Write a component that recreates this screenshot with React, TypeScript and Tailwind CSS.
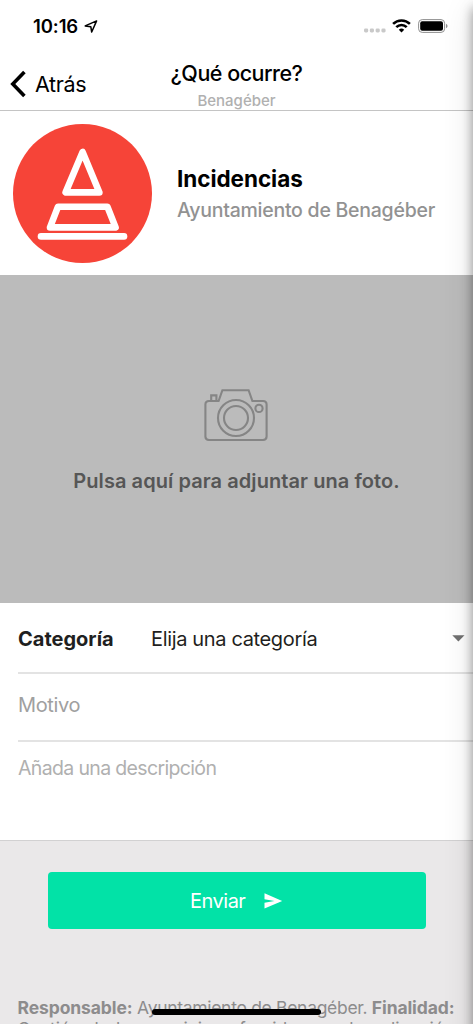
import type { ReactNode } from "react";

const StatusBar = () => {
    return (
        <div className="flex h-[54px] shrink-0 items-start justify-between pl-[33px] pr-[25px] pt-[16px]">
            <div className="flex items-center">
                <span className="w-[47px] text-[18.5px] font-semibold leading-[21px] tracking-[-0.1px]">10:16</span>
                <svg className="ml-[4px]" width="14" height="14" viewBox="0 0 14 14" fill="none" stroke="#000" strokeWidth="1.5" strokeLinejoin="round">
                    <path d="M12.6 0.9 L1.2 5.9 L6.8 6.7 L7.7 12 Z" />
                </svg>
            </div>
            <div className="flex items-start pt-[2px]">
                <svg className="mt-[10px]" width="22" height="5" viewBox="0 0 22 5" fill="#c9c9c9">
                    <rect x="0" y="0.5" width="4.2" height="4" rx="1.4" />
                    <rect x="5.8" y="0.5" width="4.2" height="4" rx="1.4" />
                    <rect x="11.6" y="0.5" width="4.2" height="4" rx="1.4" />
                    <rect x="17.4" y="0.5" width="4.2" height="4" rx="1.4" />
                </svg>
                <svg className="ml-[6px] mt-[1px]" width="19" height="14" viewBox="0 0 19 14" fill="none" stroke="#000" strokeWidth="2.6">
                    <path d="M1.1 4.9 A12 12 0 0 1 17.9 4.9" />
                    <path d="M4.3 8.1 A7.4 7.4 0 0 1 14.7 8.1" />
                    <path d="M9.5 13.6 L6.8 10.8 A4 4 0 0 1 12.2 10.8 Z" fill="#000" stroke="none" />
                </svg>
                <svg className="ml-[7px] mt-[1px]" width="30" height="14" viewBox="0 0 30 14">
                    <rect x="0.6" y="0.6" width="26" height="12.8" rx="3.6" fill="none" stroke="#8f8f8f" strokeWidth="1" />
                    <rect x="2.2" y="2.2" width="22.8" height="9.6" rx="2" fill="#000" />
                    <path d="M28 4.8 Q29.6 5.6 29.6 7 T28 9.2 Z" fill="#8f8f8f" />
                </svg>
            </div>
        </div>
    )
}

const Header = () => {
    return (
        <div className="grid h-[57px] shrink-0 grid-cols-[1fr_auto_1fr] border-b border-[#c4c4c4]">
            <button className="flex items-center self-start pl-[9px] pt-[16px]">
                <svg width="17" height="28" viewBox="0 0 17 28" fill="none" stroke="#000" strokeWidth="3.6">
                    <path d="M15.4 2 L3.8 14 L15.4 26" />
                </svg>
                <span className="ml-[9px] text-[21.5px] leading-[28px] tracking-[-0.35px]">Atrás</span>
            </button>
            <div className="flex flex-col items-center pt-[6px]">
                <h1 className="text-[21.5px] font-medium leading-[26px] tracking-[-0.5px]">¿Qué ocurre?</h1>
                <p className="mt-[5px] text-[15px] font-medium leading-[20px] text-[#b0b0b0]">Benagéber</p>
            </div>
            <div />
        </div>
    )
}

const ConeIcon = () => {
    return (
        <svg width="139" height="139" viewBox="0 0 139 139" fill="none" stroke="#fff" strokeWidth="6.6" strokeLinejoin="round" strokeLinecap="round">
            <circle cx="69.5" cy="69.5" r="69.5" fill="#f64438" stroke="none" />
            <path d="M69.6 28 L52.6 68.4 H86.4 Z" />
            <path d="M45 82.8 H94.4 L102.6 103.4 H37 Z" />
            <path d="M28 112.4 H111" />
        </svg>
    )
}

const CameraIcon = () => {
    return (
        <svg className="mr-[1px]" width="64" height="54" viewBox="0 0 64 54" fill="none" stroke="#858585" strokeWidth="2.1">
            <path d="M5 13 H14.6 L18.4 2.2 H44.6 L48.4 13 H59 Q62.6 13 62.6 16.6 V48.6 Q62.6 52 59 52 H5 Q1.4 52 1.4 48.6 V16.6 Q1.4 13 5 13" />
            <path d="M7.2 13 V7.4 H12.4 V13" />
            <circle cx="32" cy="30" r="18" />
            <circle cx="32" cy="30" r="12" />
            <circle cx="55" cy="20.4" r="3.6" />
        </svg>
    )
}

const Row = ({ children, className }: { children: ReactNode; className: string }) => {
    return <div className={`ml-[18px] flex ${className}`}>{children}</div>
}

const App = () => {
    return (
        <div className="relative flex h-[1024px] w-[473px] flex-col overflow-hidden bg-white font-[Inter,'Liberation_Sans',sans-serif] text-black">
            <StatusBar />
            <Header />

            <div className="flex h-[164px] shrink-0 items-center pl-[13px]">
                <ConeIcon />
                <div className="ml-[25px] whitespace-nowrap pt-[3px]">
                    <h2 className="text-[22.5px] font-bold leading-[30px] tracking-[-0.05px]">Incidencias</h2>
                    <p className="text-[19.5px] font-medium leading-[32px] tracking-[-0.25px] text-[#929292]">Ayuntamiento de Benagéber</p>
                </div>
            </div>

            <button className="flex h-[328px] shrink-0 flex-col items-center bg-[#bbbbbb] pt-[113px]">
                <CameraIcon />
                <span className="mt-[25px] text-[20px] font-semibold leading-[28px] tracking-[0.07px] text-[#565656]">Pulsa aquí para adjuntar una foto.</span>
            </button>

            <div className="flex h-[238px] shrink-0 flex-col border-b border-[#d2d1d2] text-[20px] tracking-[-0.35px]">
                <Row className="h-[71px] items-center border-b-2 border-[#e3e3e3] pt-[2px] text-[#1f1f21]">
                    <span className="w-[133px] font-bold tracking-normal">Categoría</span>
                    <span className="flex-1">Elija una categoría</span>
                    <svg className="mr-[8px]" width="13" height="7" viewBox="0 0 13 7" fill="#717171">
                        <path d="M0.3 0.3 H12.5 L6.4 6.6 Z" />
                    </svg>
                </Row>
                <Row className="h-[68px] items-center border-b-2 border-[#e3e3e3] pb-[4px] text-[#a0a0a0]">
                    <span>Motivo</span>
                </Row>
                <Row className="flex-1 items-start pt-[11px] text-[#b0b0b0]">
                    <span className="text-[19.5px] leading-[30px] tracking-[-0.65px]">Añada una descripción</span>
                </Row>
            </div>

            <div className="flex flex-1 flex-col bg-[#eae8e9] pt-[31px]">
                <button className="mx-[48px] flex h-[57px] w-[378px] shrink-0 items-center rounded-[4px] bg-[#02e2a7] pl-[142px] pt-px text-[20px] text-white">
                    <span className="w-[74px] text-left tracking-[-0.5px]">Enviar</span>
                    <svg width="19" height="16" viewBox="0 0 19 16" fill="#fff">
                        <path d="M0.5 0.3 L18.2 8 L0.5 15.6 V9.8 L10.5 8 L0.5 6.2 Z" />
                    </svg>
                </button>
                <div className="ml-[17.5px] mt-[68px] w-[437px] text-[17.5px] leading-[21px] tracking-[-0.31px] text-[#8d8c8d]">
                    <p className="whitespace-nowrap"><b className="tracking-[-0.1px]">Responsable:</b> Ayuntamiento de Benagéber. <b className="tracking-[-0.1px]">Finalidad:</b></p>
                    <p className="tracking-normal [text-align-last:justify]">Gestión de los servicios ofrecidos por la aplicación</p>
                </div>
            </div>

            {/* home indicator */}
            <div className="absolute bottom-[9px] left-[152px] h-[6px] w-[169px] rounded-full bg-black" />
            {/* shadow of the next screen */}
            <div className="absolute -bottom-[60px] left-full top-[8px] w-[40px] shadow-[0_0_11px_rgba(0,0,0,0.4),0_0_32px_rgba(0,0,0,0.12)]" />
        </div>
    )
}

export default App
